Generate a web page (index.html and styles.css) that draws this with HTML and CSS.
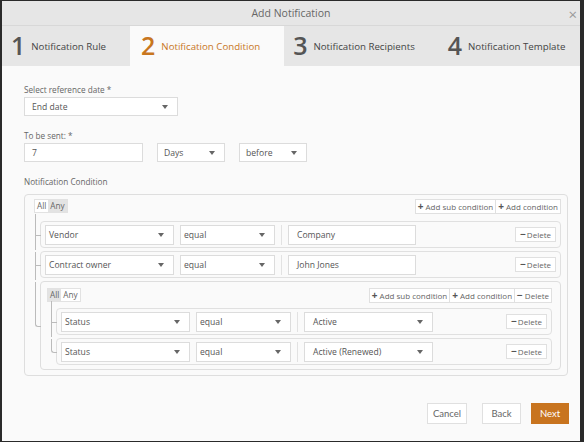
FILE: index.html
```html
<!DOCTYPE html>
<html lang="en">
<head>
    <meta charset="UTF-8">
    <title>Add Notification</title>
    <link rel="stylesheet" href="styles.css">
</head>
<body>
    <div class="dialog">
        <div class="titlebar">
            <span class="title">Add Notification</span>
            <span class="close">&times;</span>
        </div>

        <div class="tabs">
            <div class="tab"><span class="num">1</span>Notification Rule</div>
            <div class="tab active"><span class="num">2</span>Notification Condition</div>
            <div class="tab"><span class="num">3</span>Notification Recipients</div>
            <div class="tab"><span class="num">4</span>Notification Template</div>
        </div>

        <div class="content">
            <div class="field">
                <div class="label">Select reference date *</div>
                <div class="select w-ref">End date<span class="caret"></span></div>
            </div>

            <div class="field">
                <div class="label">To be sent: *</div>
                <div class="inline">
                    <div class="input w-num">7</div>
                    <div class="select w-unit">Days<span class="caret"></span></div>
                    <div class="select w-unit">before<span class="caret"></span></div>
                </div>
            </div>

            <div class="field">
                <div class="label spaced">Notification Condition</div>
                <div class="group outer">
                    <div class="group-head">
                        <div class="toggle"><span class="on">All</span><span class="sel">Any</span></div>
                        <div class="actions">
                            <span class="btn-sm"><b>+</b> Add sub condition</span><span class="btn-sm"><b>+</b> Add condition</span>
                        </div>
                    </div>
                    <div class="children">
                        <div class="child row">
                            <div class="select w-field">Vendor<span class="caret"></span></div>
                            <div class="select w-op">equal<span class="caret"></span></div>
                            <span class="sep"></span>
                            <div class="input w-val">Company</div>
                            <span class="btn-sm del"><b>&minus;</b>Delete</span>
                        </div>
                        <div class="child row">
                            <div class="select w-field">Contract owner<span class="caret"></span></div>
                            <div class="select w-op">equal<span class="caret"></span></div>
                            <span class="sep"></span>
                            <div class="input w-val">John Jones</div>
                            <span class="btn-sm del"><b>&minus;</b>Delete</span>
                        </div>
                        <div class="child group inner">
                            <div class="group-head">
                                <div class="toggle"><span class="sel">All</span><span class="on">Any</span></div>
                                <div class="actions">
                                    <span class="btn-sm"><b>+</b> Add sub condition</span><span class="btn-sm"><b>+</b> Add condition</span><span class="btn-sm"><b>&minus;</b> Delete</span>
                                </div>
                            </div>
                            <div class="children">
                                <div class="child row">
                                    <div class="select w-field">Status<span class="caret"></span></div>
                                    <div class="select w-op">equal<span class="caret"></span></div>
                                    <span class="sep"></span>
                                    <div class="select w-field value">Active<span class="caret"></span></div>
                                    <span class="btn-sm del"><b>&minus;</b>Delete</span>
                                </div>
                                <div class="child row">
                                    <div class="select w-field">Status<span class="caret"></span></div>
                                    <div class="select w-op">equal<span class="caret"></span></div>
                                    <span class="sep"></span>
                                    <div class="select w-field value">Active (Renewed)<span class="caret"></span></div>
                                    <span class="btn-sm del"><b>&minus;</b>Delete</span>
                                </div>
                            </div>
                        </div>
                    </div>
                </div>
            </div>
        </div>

        <div class="footer">
            <span class="btn">Cancel</span>
            <span class="btn back">Back</span>
            <span class="btn primary">Next</span>
        </div>
    </div>
</body>
</html>
```

FILE: styles.css
```css
/* Dialog */

html, body {
    margin: 0;
    height: 100%;
}

body {
    background-color: #2a2a2a;
    font-family: "Open Sans", "Noto Sans", sans-serif;
    color: #555;
    padding: 1px 4px 1px 2px;
    box-sizing: border-box;
}

.dialog {
    height: 440px;
    background-color: #fafafa;
    display: flex;
    flex-direction: column;
}

.titlebar {
    height: 24px;
    background-color: #e6e6e6;
    border-bottom: 1px solid #d8d8d8;
    display: flex;
    align-items: center;
    justify-content: center;
    position: relative;
}

.title {
    font-size: 10.5px;
    color: #666;
}

.close {
    position: absolute;
    right: 3px;
    top: 6px;
    font-size: 15px;
    line-height: 15px;
    color: #999;
}

/* Tabs */

.tabs {
    display: flex;
    height: 40px;
    background-color: #e6e6e6;
}

.tab {
    display: flex;
    align-items: center;
    padding: 0 24px 0 9px;
    font-size: 9.7px;
    color: #444;
    white-space: nowrap;
}

.tab:last-child {
    flex: 1;
}

.tab.active {
    background-color: #fafafa;
    color: #c8761e;
    padding-left: 11px;
}

.num {
    font-size: 25px;
    font-weight: 600;
    color: #555;
    margin-right: 6px;
    position: relative;
    top: -1px;
}

.tab.active .num {
    color: #c8761e;
}

/* Form */

.content {
    flex: 1;
    padding: 18px 12px 0 22px;
}

.field {
    margin-bottom: 14px;
}

.label {
    font-size: 8.2px;
    color: #666;
    height: 12px;
    line-height: 12px;
    margin-bottom: 1px;
}

.label.spaced {
    margin-bottom: 6px;
}

.inline {
    display: flex;
    gap: 14px;
}

.select, .input {
    box-sizing: border-box;
    height: 19px;
    background-color: #fff;
    border: 1px solid #dcdcdc;
    font-size: 8.6px;
    color: #555;
    padding-left: 7px;
    display: flex;
    align-items: center;
    position: relative;
    white-space: nowrap;
}

.caret {
    position: absolute;
    right: 9px;
    top: 7px;
    border-left: 3px solid transparent;
    border-right: 3px solid transparent;
    border-top: 4px solid #666;
}

.w-ref { width: 154px; }
.w-num { width: 119px; }
.w-unit { width: 68px; padding-left: 6px; }
.w-field { width: 129px; }
.w-op { width: 95px; }
.w-val { width: 128px; }

/* Condition groups */

.group {
    border: 1px solid #dedede;
    border-radius: 4px;
    box-sizing: border-box;
}

.group.outer {
    padding: 4px 6px 5px 9px;
}

.group.inner {
    padding: 6px 8px 4px 6px;
}

.group-head {
    display: flex;
    align-items: center;
    justify-content: space-between;
    height: 14px;
}

.toggle {
    display: flex;
    font-size: 8.2px;
    line-height: 12px;
    border: 1px solid #e2e2e2;
}

.toggle span {
    padding: 0 2px;
}

.toggle .on {
    background-color: #fff;
    color: #666;
}

.toggle .sel {
    background-color: #e3e3e3;
    color: #666;
}

.actions {
    display: flex;
}

.btn-sm {
    font-size: 8px;
    line-height: 12px;
    color: #666;
    background-color: #fff;
    border: 1px solid #e0e0e0;
    padding: 0 2px;
    white-space: nowrap;
}

.actions .btn-sm + .btn-sm {
    border-left: none;
}

.btn-sm b {
    color: #555;
    font-size: 10px;
    font-weight: 700;
}

.children {
    margin-top: 8px;
    margin-left: 6px;
}

.group.inner .children {
    margin-top: 6px;
    margin-left: 9px;
}

.child {
    position: relative;
}

.child + .child {
    margin-top: 3px;
}

/* tree connectors */
.child::before {
    content: '';
    position: absolute;
    left: -6px;
    top: 0;
    width: 5px;
    height: 50%;
    border-left: 1px solid #bbb;
    border-bottom: 1px solid #bbb;
}

.child:first-child::before {
    top: -8px;
    height: calc(50% + 8px);
}

.child:not(:last-child)::after {
    content: '';
    position: absolute;
    left: -6px;
    top: 50%;
    bottom: -3px;
    border-left: 1px solid #bbb;
}

.child:last-child::before {
    border-bottom-left-radius: 3px;
}

.row {
    border: 1px solid #e0e0e0;
    border-radius: 4px;
    padding: 3px 4px;
    display: flex;
    align-items: center;
    gap: 6px;
    height: 27px;
    box-sizing: border-box;
}

.row .select, .row .input {
    height: 20px;
    padding-left: 3px;
}

.row .input, .row .select.value {
    padding-left: 8px;
}

.sep {
    width: 1px;
    height: 20px;
    background-color: #e2e2e2;
}

.del {
    margin-left: auto;
    align-self: flex-start;
    margin-top: 2px;
    padding: 0 4px;
}

.del b {
    margin-right: 1px;
}

/* Footer */

.footer {
    display: flex;
    justify-content: flex-end;
    padding: 0 11px 17px 0;
}

.btn {
    box-sizing: border-box;
    height: 21px;
    width: 40px;
    font-family: Lato, sans-serif;
    font-size: 9.5px;
    color: #666;
    background-color: #fff;
    border: 1px solid #e0e0e0;
    display: flex;
    align-items: center;
    justify-content: center;
}

.btn.back {
    margin-left: 15px;
    width: 39px;
}

.btn.primary {
    margin-left: 10px;
    width: 38px;
    background-color: #c8741f;
    border-color: #c8741f;
    color: #fff;
}
```
